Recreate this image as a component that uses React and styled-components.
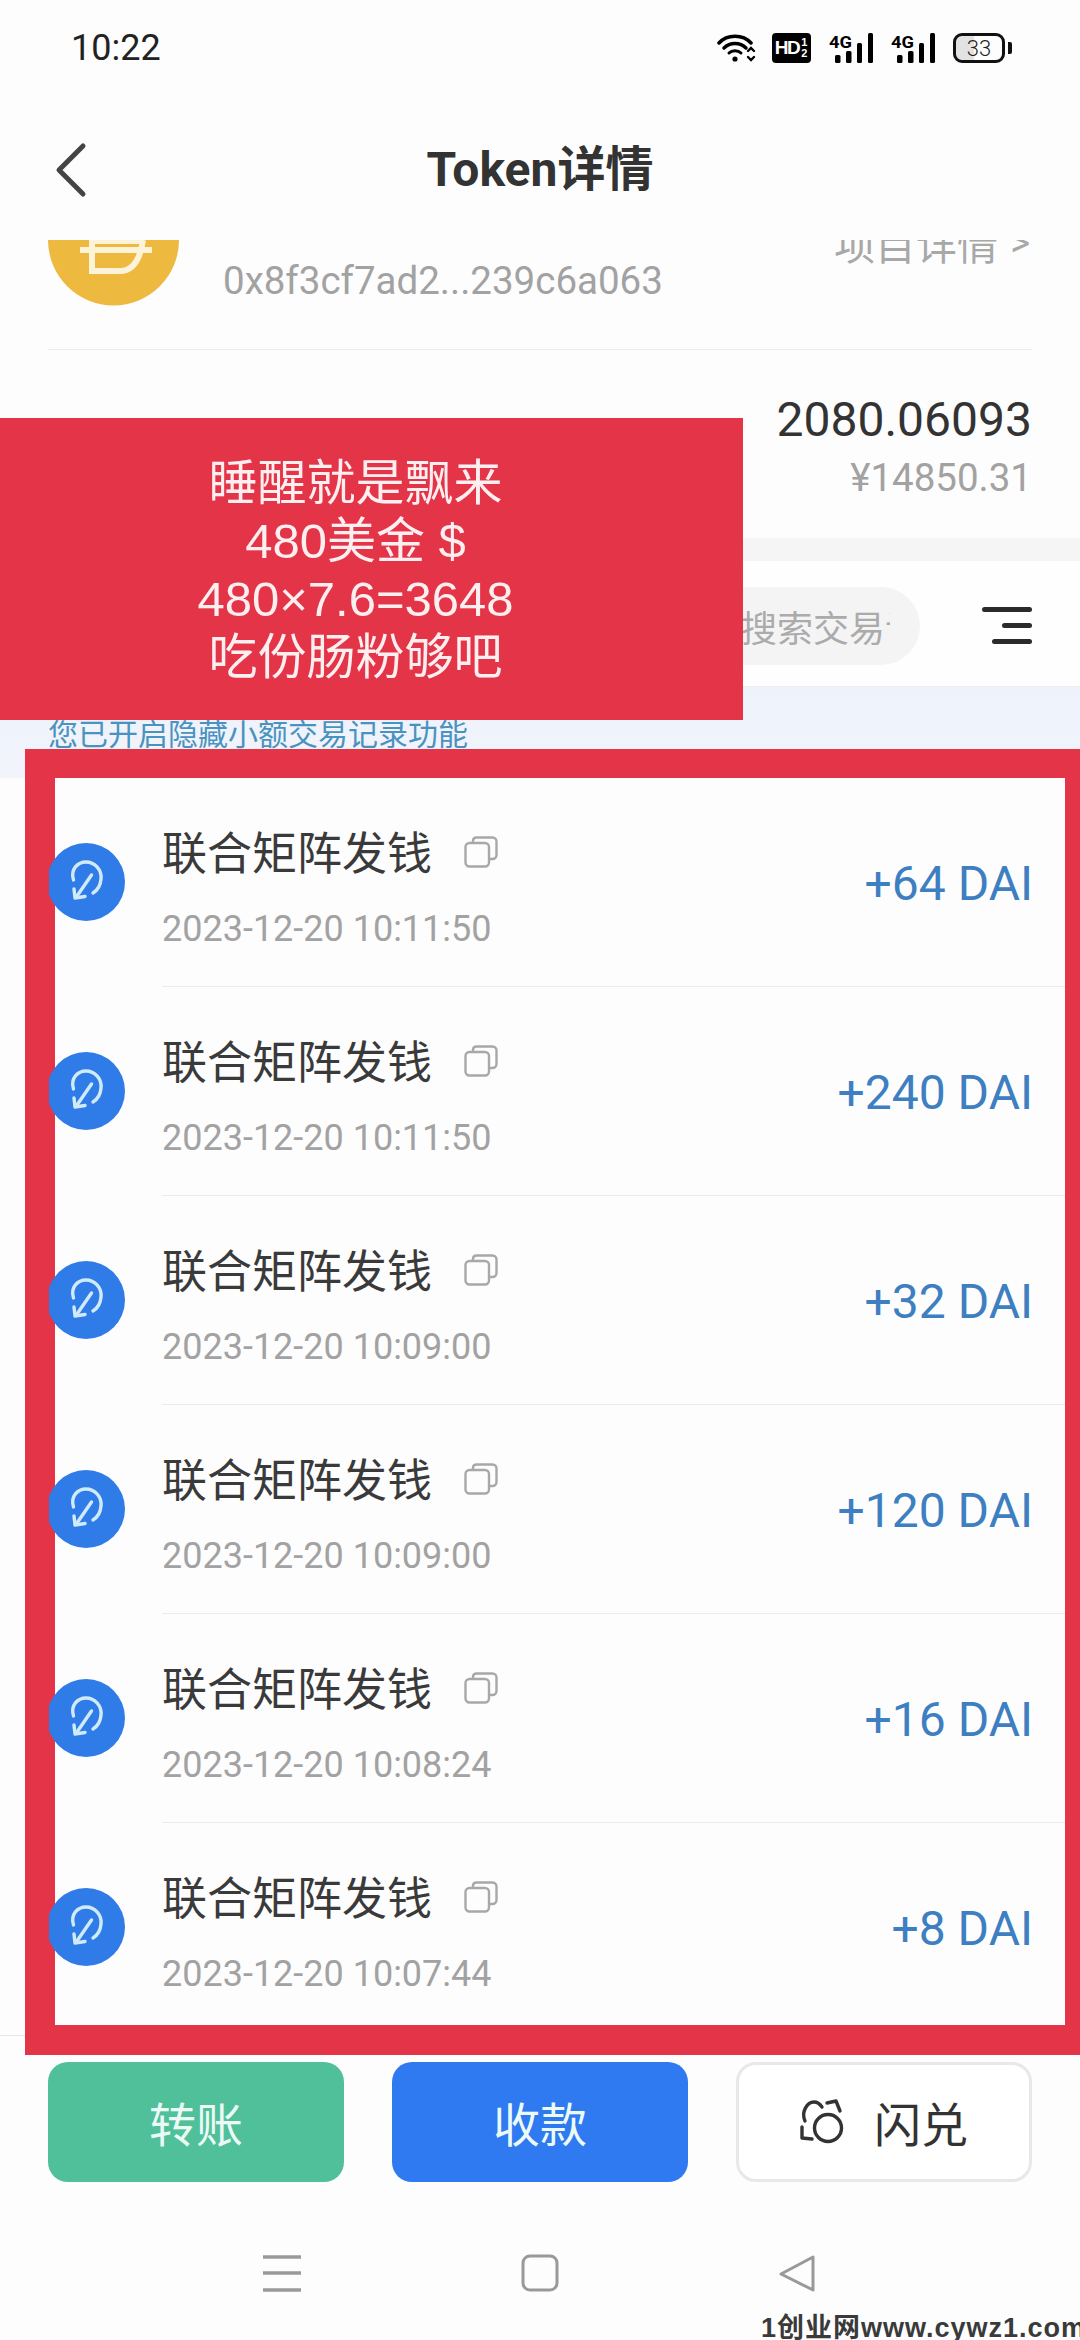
import React from "react";
import styled, { createGlobalStyle } from "styled-components";

const GlobalStyle = createGlobalStyle`
    html, body {
        margin: 0;
        padding: 0;
        background: #fdfdfe;
    }
    * {
        box-sizing: border-box;
    }
`;

const Screen = styled.div`
    position: relative;
    width: 1080px;
    height: 2340px;
    overflow: hidden;
    background: #fdfdfe;
    font-family: Roboto, "Noto Sans CJK SC", sans-serif;
    color: #333;
`;

/** 상태바 */
const StatusBar = styled.div`
    display: flex;
    align-items: center;
    justify-content: space-between;
    height: 96px;
    padding: 0 75px 0 71px;
`;

const Clock = styled.span`
    font-size: 36px;
    color: #222;
`;

const StatusIcons = styled.div`
    display: flex;
    align-items: center;
    height: 30px;
`;

const HdBadge = styled.span`
    display: flex;
    align-items: center;
    justify-content: center;
    width: 39px;
    height: 30px;
    margin: 0 18px 0 15px;
    border-radius: 4px;
    background: #000;
    color: #fff;
    font-family: "Liberation Sans", sans-serif;
    font-size: 19px;
    font-weight: 700;
    letter-spacing: -1.5px;

    small {
        font-size: 11px;
        line-height: 11px;
        width: 7px;
        margin-left: 2px;
        word-break: break-all;
    }
`;

const Battery = styled.div`
    position: relative;
    display: flex;
    align-items: center;
    justify-content: center;
    width: 52px;
    height: 30px;
    margin-left: 18px;
    border: 3px solid #111;
    border-radius: 9px;
    font-size: 22px;
    font-weight: 300;
    color: #222;
    background: linear-gradient(90deg, #e2e2e2 40%, #fdfdfe 40%);
    background-clip: padding-box;

    &::after {
        content: "";
        position: absolute;
        right: -10px;
        top: 6px;
        width: 4px;
        height: 12px;
        border-radius: 0 2px 2px 0;
        background: #111;
    }
`;

const Header = styled.div`
    display: flex;
    align-items: center;
    justify-content: center;
    position: relative;
    height: 144px;
    padding-bottom: 6px;
`;

const BackIcon = styled.svg`
    position: absolute;
    left: 54px;
    top: 46px;
`;

const Title = styled.h1`
    margin: 0;
    font-size: 48px;
    font-weight: 700;
    color: #333;
`;

/** 토큰 정보 */
const TokenRow = styled.div`
    display: flex;
    height: 110px;
    margin: 0 48px;
    overflow: hidden;
    border-bottom: 1px solid #ececee;
`;

const Coin = styled.svg`
    flex: none;
    margin-top: -66px;
`;

const Address = styled.div`
    margin: 16px 0 0 44px;
    font-size: 38.5px;
    line-height: 50px;
    color: #a2a2a2;
`;

const ProjectLink = styled.div`
    margin: -17px 2px 0 auto;
    font-size: 41px;
    line-height: 40px;
    color: #a8a8a8;
    white-space: nowrap;

    span {
        margin-left: 12px;
        font-size: 38px;
        vertical-align: 4px;
    }
`;

const Balance = styled.div`
    display: flex;
    flex-direction: column;
    align-items: flex-end;
    height: 188px;
    padding: 40px 48px 0 0;
`;

const BalanceAmount = styled.div`
    font-size: 48px;
    line-height: 60px;
    color: #333;
`;

const BalanceFiat = styled.div`
    margin-top: 3px;
    font-size: 38.5px;
    line-height: 50px;
    color: #a2a2a2;
`;

const Band = styled.div`
    height: 23px;
    background: #f5f5f6;
`;

/** 검색 + 필터 */
const Toolbar = styled.div`
    display: flex;
    align-items: center;
    justify-content: flex-end;
    height: 126px;
    padding: 4px 48px 0 0;
    background: #fefefe;
    border-bottom: 1px solid #eceef2;
`;

const SearchPill = styled.div`
    display: flex;
    align-items: center;
    width: 402px;
    height: 78px;
    padding: 0 30px 0 223px;
    border-radius: 39px;
    background: #f4f4f5;
`;

const Placeholder = styled.span`
    overflow: hidden;
    white-space: nowrap;
    font-size: 36px;
    color: #ababab;
`;

const FilterIcon = styled.svg`
    margin-left: 62px;
`;

const ListArea = styled.div`
    background: linear-gradient(#eef2fb 0, #f1f4fb 90px, #fdfdfe 92px);
`;

const Notice = styled.div`
    height: 62px;
    padding: 33px 0 0 48px;
    font-size: 30px;
    line-height: 30px;
    color: #4a93c0;
    overflow: hidden;
`;

const Frame = styled.div`
    position: relative;
    z-index: 1;
    margin-left: 25px;
    border: solid #e33448;
    border-width: 29px 15px 30px 30px;
    background: #fdfdfe;
`;

const Row = styled.div`
    display: flex;
    height: 209px;

    &:last-child {
        height: 202px;
    }
`;

const TxIcon = styled.svg`
    flex: none;
    margin: 65px 37px 0 -8px;
    clip-path: inset(0 0 0 2px);
`;

const RowBody = styled.div`
    display: flex;
    flex: 1;
    padding: 46px 32px 0 0;
    border-bottom: 1px solid ${(props) => (props.$last ? "transparent" : "#ececee")};
`;

const RowText = styled.div`
    flex: 1;
`;

const RowTitle = styled.div`
    display: flex;
    align-items: center;
    height: 62px;
    font-size: 45px;
    line-height: 62px;
    color: #3a3a3a;

    svg {
        margin: -6px 0 0 32px;
    }
`;

const RowTime = styled.div`
    margin-top: 13px;
    font-size: 36px;
    line-height: 60px;
    color: #a2a2a2;
`;

const Amount = styled.div`
    margin-top: 30px;
    font-size: 48px;
    line-height: 60px;
    color: #3d7fc1;
`;

/** 하단 버튼 */
const Footer = styled.div`
    display: flex;
    justify-content: space-between;
    margin-top: -20px;
    padding: 26px 48px 0 48px;
    border-top: 1px solid #e8e8ea;
`;

const ActionButton = styled.button`
    display: flex;
    align-items: center;
    justify-content: center;
    gap: 30px;
    width: 296px;
    height: 120px;
    padding: 0 0 2px;
    border: ${(props) => (props.$outline ? "3px solid #e8e8ea" : "none")};
    border-radius: 20px;
    background: ${(props) => props.$bg || "#fff"};
    color: ${(props) => (props.$outline ? "#333" : "#ecfaf6")};
    font-family: "Noto Sans CJK SC", sans-serif;
    font-size: 47px;
`;

const NavBar = styled.div`
    display: flex;
    justify-content: center;
    gap: 220px;
    margin-top: 72px;
`;

const Watermark = styled.div`
    position: absolute;
    right: -6px;
    bottom: -3px;
    font-family: "Liberation Sans", "Noto Sans CJK SC", sans-serif;
    font-size: 27px;
    line-height: 30px;
    font-weight: 700;
    letter-spacing: 1px;
    color: #3a3a3a;
    white-space: nowrap;
`;

const BannerBox = styled.div`
    position: absolute;
    left: 0;
    top: 418px;
    z-index: 2;
    display: flex;
    align-items: center;
    justify-content: center;
    width: 743px;
    height: 302px;
    padding: 2px 32px 0 0;
    background: #e33448;
    color: #fdeef0;
    font-family: "Liberation Sans", "Noto Sans CJK SC", sans-serif;
    font-size: 49px;
    line-height: 58px;
    text-align: center;
`;

const rows = [
    { time: "2023-12-20 10:11:50", amount: "+64 DAI" },
    { time: "2023-12-20 10:11:50", amount: "+240 DAI" },
    { time: "2023-12-20 10:09:00", amount: "+32 DAI" },
    { time: "2023-12-20 10:09:00", amount: "+120 DAI" },
    { time: "2023-12-20 10:08:24", amount: "+16 DAI" },
    { time: "2023-12-20 10:07:44", amount: "+8 DAI" },
];

const WifiIcon = () => (
    <svg width="40" height="30" viewBox="0 0 40 30" fill="none" stroke="#000" strokeLinecap="round">
        <path d="M2 10 C10 1 26 1 34 10" strokeWidth="3.5" />
        <path d="M7 15 C13 9 23 9 29 15" strokeWidth="3.5" />
        <path d="M12 20 C15 17 21 17 24 20" strokeWidth="3" />
        <circle cx="18" cy="26" r="2.6" fill="#000" stroke="none" />
        <path d="M31 18 l3 -3 l3 3 M31 24 l3 3 l3 -3" strokeWidth="2.4" />
    </svg>
);

const SignalIcon = ({ style }) => (
    <svg width="44" height="30" viewBox="0 0 44 30" style={style}>
        <text x="0" y="14.5" fontFamily="Roboto" fontWeight="700" fontSize="16" textLength="23" lengthAdjust="spacingAndGlyphs">4G</text>
        <rect x="6" y="22" width="5.5" height="8" rx="1.5" />
        <rect x="17" y="18" width="5.5" height="12" rx="1.5" />
        <rect x="28" y="10" width="5" height="20" rx="1.5" />
        <rect x="39" y="0" width="5" height="30" rx="1.5" />
    </svg>
);

const TxGlyph = () => (
    <TxIcon width="78" height="78" viewBox="0 0 78 78">
        <circle cx="39" cy="39" r="39" fill="#2f7be8" />
        <g fill="none" stroke="#cfeaf8" strokeWidth="3.4" strokeLinecap="round" strokeLinejoin="round">
            <path d="M26.5 37 C23 26 31 19 39 19 C48 19 55 27 54 36 C53.5 42 51 47 46 50" />
            <path d="M44.5 32 L30 53" />
            <path d="M27 46 L28 55 L38 53.5" />
        </g>
    </TxIcon>
);

const CopyIcon = () => (
    <svg width="34" height="32" viewBox="0 0 34 32" fill="none" stroke="#a8a8a8" strokeWidth="2.4">
        <path d="M9 6 V4.5 A3.5 3.5 0 0 1 12.5 1.5 H28.5 A4 4 0 0 1 32.5 5.5 V19 A4 4 0 0 1 28.5 23 H25" />
        <rect x="1.5" y="7" width="23.5" height="23.5" rx="4" />
    </svg>
);

const SwapIcon = () => (
    <svg width="44" height="46" viewBox="0 0 44 46" fill="none" stroke="#333" strokeWidth="3.4" strokeLinecap="round" strokeLinejoin="round">
        <circle cx="28" cy="30" r="13.5" />
        <path d="M5 23 C1 14 7 4 14 4 C17 4 20 6 22 9" />
        <path d="M27 5 L36 3 L40 13" />
        <path d="M2 29 L2 40 L12 41" />
    </svg>
);

const App = () => {
    return (
        <Screen>
            <GlobalStyle />
            <StatusBar>
                <Clock>10:22</Clock>
                <StatusIcons>
                    <WifiIcon />
                    <HdBadge>HD<small>12</small></HdBadge>
                    <SignalIcon />
                    <SignalIcon style={{ marginLeft: 18 }} />
                    <Battery>33</Battery>
                </StatusIcons>
            </StatusBar>

            <Header>
                <BackIcon width="34" height="56" viewBox="0 0 34 56" fill="none" stroke="#444" strokeWidth="5" strokeLinecap="round" strokeLinejoin="round">
                    <path d="M29 4 L5 28 L29 52" />
                </BackIcon>
                <Title>Token详情</Title>
            </Header>

            <TokenRow>
                <Coin width="131" height="132" viewBox="0 0 131 132">
                    <circle cx="65.5" cy="66" r="65.5" fill="#eeb93f" />
                    <g fill="none" stroke="#fdf3d8" strokeWidth="6">
                        <path d="M32 76 H104" />
                        <path d="M44 50 V97 H72 C84 97 92 86 95 66" />
                        <path d="M44 67 H92" />
                    </g>
                </Coin>
                <Address>0x8f3cf7ad2...239c6a063</Address>
                <ProjectLink>项目详情<span>&gt;</span></ProjectLink>
            </TokenRow>

            <Balance>
                <BalanceAmount>2080.06093</BalanceAmount>
                <BalanceFiat>¥14850.31</BalanceFiat>
            </Balance>

            <Band />

            <Toolbar>
                <SearchPill>
                    <Placeholder>搜索交易记录</Placeholder>
                </SearchPill>
                <FilterIcon width="50" height="38" viewBox="0 0 50 38" fill="#2b2b2b">
                    <rect x="0" y="0" width="50" height="5" rx="2.5" />
                    <rect x="20" y="16" width="30" height="5" rx="2.5" />
                    <rect x="10" y="32" width="40" height="5" rx="2.5" />
                </FilterIcon>
            </Toolbar>

            <ListArea>
                <Notice>您已开启隐藏小额交易记录功能</Notice>
                <Frame>
                    {rows.map((row, index) => (
                        <Row key={index}>
                            <TxGlyph />
                            <RowBody $last={index === rows.length - 1}>
                                <RowText>
                                    <RowTitle>
                                        联合矩阵发钱
                                        <CopyIcon />
                                    </RowTitle>
                                    <RowTime>{row.time}</RowTime>
                                </RowText>
                                <Amount>{row.amount}</Amount>
                            </RowBody>
                        </Row>
                    ))}
                </Frame>
            </ListArea>

            <Footer>
                <ActionButton $bg="#50c09a">转账</ActionButton>
                <ActionButton $bg="#2f7af0">收款</ActionButton>
                <ActionButton $outline>
                    <SwapIcon />
                    闪兑
                </ActionButton>
            </Footer>

            <NavBar>
                <svg width="38" height="38" viewBox="0 0 38 38" stroke="#999" strokeWidth="3.4">
                    <path d="M0 3 H38 M0 19 H38 M0 36 H38" />
                </svg>
                <svg width="38" height="38" viewBox="0 0 38 38" fill="none" stroke="#999" strokeWidth="3">
                    <rect x="2" y="2" width="34" height="34" rx="7" />
                </svg>
                <svg width="38" height="38" viewBox="0 0 38 38" fill="none" stroke="#999" strokeWidth="3" strokeLinejoin="round">
                    <path d="M34 3 V36 L2 20 Z" />
                </svg>
            </NavBar>

            {/* 이미지 위에 찍힌 요소 */}
            <BannerBox>
                <div>
                    睡醒就是飘来<br />
                    480美金 $<br />
                    480×7.6=3648<br />
                    吃份肠粉够吧
                </div>
            </BannerBox>
            <Watermark>1创业网www.cywz1.com</Watermark>
        </Screen>
    );
};

export default App;
